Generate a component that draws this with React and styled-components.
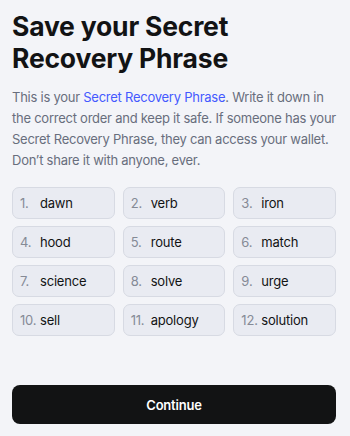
import React from "react";
import styled, { createGlobalStyle } from "styled-components";

const GlobalStyle = createGlobalStyle`
  * { box-sizing: border-box; }
  html, body { margin: 0; padding: 0; background: #f3f4f8; }
  body { font-family: Inter, "Noto Sans", sans-serif; }
`;

const Page = styled.div`
  min-height: 100vh;
  display: flex;
  flex-direction: column;
  padding: 10px 14px 12px 12px;
  background: #f3f4f8;
`;

const Title = styled.h1`
  margin: 0;
  font-size: 26.5px;
  line-height: 32px;
  font-weight: 700;
  color: #121314;
  letter-spacing: -0.2px;
`;

const Description = styled.p`
  margin: 13px 0 0;
  font-size: 13px;
  line-height: 21px;
  letter-spacing: -0.25px;
  color: #686e7d;
`;

const Link = styled.a`
  color: #4459ff;
  text-decoration: none;
`;

const WordGrid = styled.div`
  margin-top: 16px;
  display: grid;
  grid-template-columns: repeat(3, 1fr);
  gap: 7px 8px;
`;

const WordCell = styled.div`
  height: 32px;
  display: flex;
  align-items: center;
  padding-left: 7px;
  background: #e9ebf2;
  border: 1px solid #d7dae3;
  border-radius: 7px;
  font-size: 13px;
  letter-spacing: -0.2px;
`;

const Index = styled.span`
  min-width: 17px;
  margin-right: 3px;
  color: #858a96;
`;

const Word = styled.span`
  color: #121314;
`;

const ContinueButton = styled.button`
  margin-top: auto;
  height: 39px;
  width: 100%;
  border: none;
  border-radius: 8px;
  background: #121314;
  color: #fff;
  font-family: Inter, "Noto Sans", sans-serif;
  font-size: 13px;
  font-weight: 600;
  letter-spacing: -0.2px;
  cursor: pointer;
`;

const words = [
  "dawn", "verb", "iron",
  "hood", "route", "match",
  "science", "solve", "urge",
  "sell", "apology", "solution",
];

export default function App() {
  return (
    <>
      <GlobalStyle />
      <Page>
        <Title>Save your Secret Recovery Phrase</Title>
        <Description>
          This is your <Link href="#">Secret Recovery Phrase</Link>. Write it
          down in the correct order and keep it safe. If someone has your
          Secret Recovery Phrase, they can access your wallet. Don’t share it
          with anyone, ever.
        </Description>
        <WordGrid>
          {words.map((w, i) => (
            <WordCell key={w}>
              <Index>{i + 1}.</Index>
              <Word>{w}</Word>
            </WordCell>
          ))}
        </WordGrid>
        <ContinueButton>Continue</ContinueButton>
      </Page>
    </>
  );
}
